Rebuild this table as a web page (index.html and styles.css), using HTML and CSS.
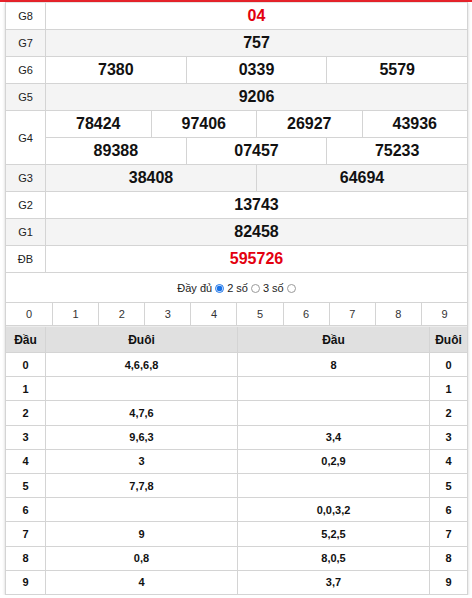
FILE: index.html
```
<!DOCTYPE html>
<html lang="vi">
<head>
<meta charset="utf-8">
<link rel="stylesheet" href="styles.css">
</head>
<body>
<div class="topbar"></div>
<div class="wrap">
  <div class="prize">
    <div class="row"><div class="lbl">G8</div><div class="vals"><div class="cell red">04</div></div></div>
    <div class="row alt"><div class="lbl">G7</div><div class="vals"><div class="cell">757</div></div></div>
    <div class="row"><div class="lbl">G6</div><div class="vals"><div class="cell">7380</div><div class="cell">0339</div><div class="cell">5579</div></div></div>
    <div class="row alt"><div class="lbl">G5</div><div class="vals"><div class="cell">9206</div></div></div>
    <div class="row"><div class="lbl">G4</div>
      <div class="vals stack">
        <div class="sub"><div class="cell">78424</div><div class="cell">97406</div><div class="cell">26927</div><div class="cell">43936</div></div>
        <div class="sub"><div class="cell">89388</div><div class="cell">07457</div><div class="cell">75233</div></div>
      </div>
    </div>
    <div class="row alt"><div class="lbl">G3</div><div class="vals"><div class="cell">38408</div><div class="cell">64694</div></div></div>
    <div class="row"><div class="lbl">G2</div><div class="vals"><div class="cell">13743</div></div></div>
    <div class="row alt"><div class="lbl">G1</div><div class="vals"><div class="cell">82458</div></div></div>
    <div class="row"><div class="lbl">ĐB</div><div class="vals"><div class="cell red">595726</div></div></div>
  </div>
  <div class="opts">Đầy đủ <span class="radio on"></span> 2 số <span class="radio"></span> 3 số <span class="radio"></span></div>
  <div class="digits">
    <div class="d">0</div><div class="d">1</div><div class="d">2</div><div class="d">3</div><div class="d">4</div><div class="d">5</div><div class="d">6</div><div class="d">7</div><div class="d">8</div><div class="d">9</div>
  </div>
  <div class="loto">
    <div class="lrow head"><div class="c">Đầu</div><div class="c">Đuôi</div><div class="c">Đầu</div><div class="c">Đuôi</div></div>
    <div class="lrow"><div class="c">0</div><div class="c">4,6,6,8</div><div class="c">8</div><div class="c">0</div></div>
    <div class="lrow"><div class="c">1</div><div class="c"></div><div class="c"></div><div class="c">1</div></div>
    <div class="lrow"><div class="c">2</div><div class="c">4,7,6</div><div class="c"></div><div class="c">2</div></div>
    <div class="lrow"><div class="c">3</div><div class="c">9,6,3</div><div class="c">3,4</div><div class="c">3</div></div>
    <div class="lrow"><div class="c">4</div><div class="c">3</div><div class="c">0,2,9</div><div class="c">4</div></div>
    <div class="lrow"><div class="c">5</div><div class="c">7,7,8</div><div class="c"></div><div class="c">5</div></div>
    <div class="lrow"><div class="c">6</div><div class="c"></div><div class="c">0,0,3,2</div><div class="c">6</div></div>
    <div class="lrow"><div class="c">7</div><div class="c">9</div><div class="c">5,2,5</div><div class="c">7</div></div>
    <div class="lrow"><div class="c">8</div><div class="c">0,8</div><div class="c">8,0,5</div><div class="c">8</div></div>
    <div class="lrow"><div class="c">9</div><div class="c">4</div><div class="c">3,7</div><div class="c">9</div></div>
  </div>
</div>
</body>
</html>
```
FILE: styles.css
```
* { box-sizing: border-box; }
html, body { margin: 0; padding: 0; background: #fff; }
body { font-family: "Liberation Sans", Arial, sans-serif; color: #111; }

.topbar { height: 2px; background: #e8232b; }

.wrap {
  margin-left: 5px;
  width: 463px;
  border-left: 1px solid #d4d4d4;
  border-right: 1px solid #d4d4d4;
  box-shadow: 0 1px 3px rgba(0,0,0,0.18);
}

.prize { border-top: 1px solid #e4e4e4; }
.row { display: flex; border-bottom: 1px solid #d4d4d4; }
.row.alt { background: #f4f4f4; }
.lbl {
  width: 40px;
  flex: none;
  border-right: 1px solid #d4d4d4;
  display: flex;
  align-items: center;
  justify-content: center;
  font-size: 11px;
  color: #222;
}
.vals { flex: 1; display: flex; }
.vals.stack { flex-direction: column; }
.sub { display: flex; }
.sub + .sub { border-top: 1px solid #d4d4d4; }
.cell {
  flex: 1;
  height: 26px;
  line-height: 26px;
  text-align: center;
  font-size: 16px;
  font-weight: bold;
  color: #111;
}
.cell + .cell { border-left: 1px solid #d4d4d4; }
.cell.red { color: #e3000f; }

.opts {
  height: 29px;
  display: flex;
  align-items: center;
  justify-content: center;
  gap: 3px;
  font-size: 11px;
  color: #222;
  padding-top: 1px;
}
.radio {
  width: 9px;
  height: 9px;
  border-radius: 50%;
  border: 1px solid #9a9a9a;
  background: #fff;
  display: inline-block;
}
.radio.on {
  border: 1px solid #1a73e8;
  background: radial-gradient(circle, #1a73e8 0 2.6px, #fff 3.2px);
}

.digits {
  display: grid;
  grid-template-columns: repeat(10, 1fr);
  border-top: 1px solid #d4d4d4;
  border-bottom: 1px solid #d4d4d4;
}
.d {
  height: 22px;
  line-height: 22px;
  text-align: center;
  font-size: 11px;
  color: #333;
}
.d + .d { border-left: 1px solid #d4d4d4; }

.lrow {
  display: grid;
  grid-template-columns: 40px 191px 192px 1fr;
  height: 24.2px;
  border-bottom: 1px solid #d4d4d4;
}
.lrow.head {
  height: 27px;
  background: #e0e0e0;
  border-top: 1px solid #ececec;
}
.c {
  display: flex;
  align-items: center;
  justify-content: center;
  font-size: 11px;
  font-weight: bold;
  color: #111;
}
.c + .c { border-left: 1px solid #d4d4d4; }
.c:nth-child(2) { border-left: none; }
.lrow .c:nth-child(1) { border-right: 1px solid #d4d4d4; }
.head .c { font-size: 12px; }
```
